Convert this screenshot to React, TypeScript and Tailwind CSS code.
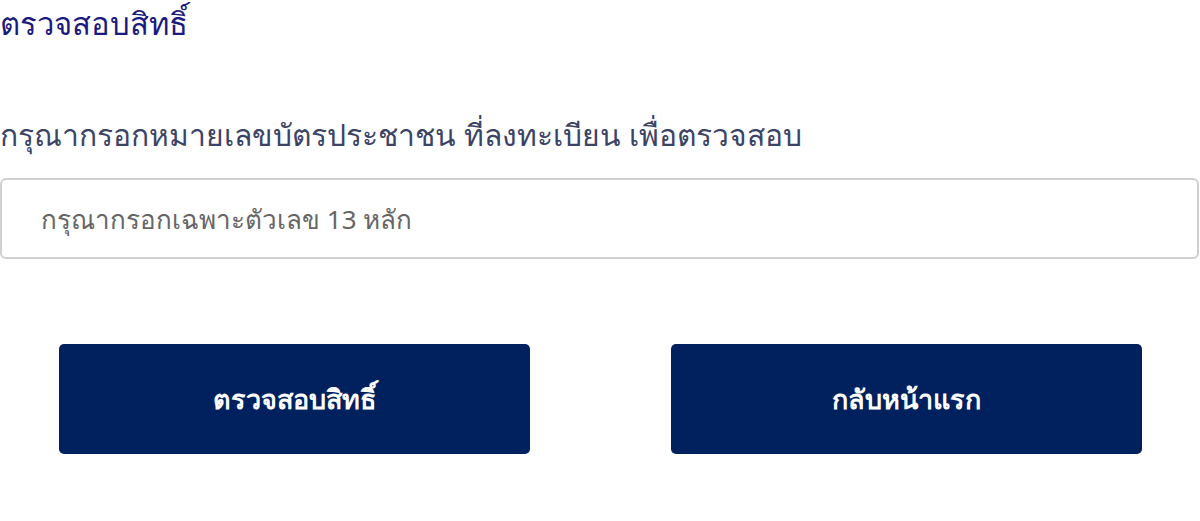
export default function App() {
  return (
    <div className="w-[1200px] h-[521px] bg-white font-['Noto_Sans',sans-serif]">
      <h1 className="pt-[3px] text-[31px] leading-[40px] text-[#1b1a7e] font-normal">ตรวจสอบสิทธิ์</h1>

      <p className="mt-[72px] text-[30px] leading-[40px] text-[#3b4466]">
        กรุณากรอกหมายเลขบัตรประชาชน ที่ลงทะเบียน เพื่อตรวจสอบ
      </p>

      <input
        type="text"
        placeholder="กรุณากรอกเฉพาะตัวเลข 13 หลัก"
        className="mt-[23px] block w-[1199px] h-[81px] px-[39px] border-2 border-[#d0d0d0] rounded-[6px] text-[26px] text-[#333] placeholder:text-[#666] outline-none"
      />

      <div className="mt-[85px] flex gap-[141px] pl-[59px]">
        <button className="w-[471px] h-[110px] bg-[#00215d] rounded-[5px] text-white text-[27px] font-bold">
          ตรวจสอบสิทธิ์
        </button>
        <button className="w-[471px] h-[110px] bg-[#00215d] rounded-[5px] text-white text-[27px] font-bold">
          กลับหน้าแรก
        </button>
      </div>
    </div>
  );
}
